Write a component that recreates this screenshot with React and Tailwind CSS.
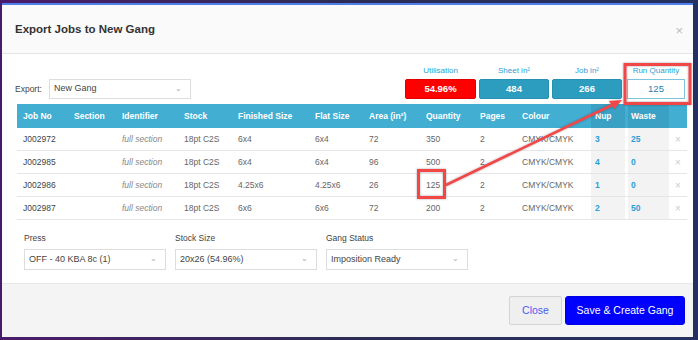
import React from "react";

const cols = "grid grid-cols-[51px_48px_62px_54px_77px_54px_57px_54px_42px_75px_34px_44px_18px]";

const rows = [
  ["J002972", "", "full section", "18pt C2S", "6x4", "6x4", "72", "350", "2", "CMYK/CMYK", "3", "25"],
  ["J002985", "", "full section", "18pt C2S", "6x4", "6x4", "96", "500", "2", "CMYK/CMYK", "4", "0"],
  ["J002986", "", "full section", "18pt C2S", "4.25x6", "4.25x6", "26", "125", "2", "CMYK/CMYK", "1", "0"],
  ["J002987", "", "full section", "18pt C2S", "6x6", "6x6", "72", "200", "2", "CMYK/CMYK", "2", "50"],
];

function Select({ value, className = "" }) {
  return (
    <div className={"flex items-center justify-between h-[21px] border border-[#ddd] bg-white pl-[4px] text-[9px] text-[#444] " + className}>
      <span>{value}</span>
      <span className="text-[8px] text-[#aaa] pr-[8px] leading-none">⌄</span>
    </div>
  );
}

export default function App() {
  return (
    <div className="relative w-[698px] h-[340px] overflow-hidden bg-gradient-to-r from-[#4a1a6a] via-[#2c2c55] to-[#233060] pl-[2px] pt-[3px] font-['Liberation_Sans',Arial,sans-serif]">
      <div className="w-[691px] h-[334px] bg-white border-t-2 border-[#4f7fe8] flex flex-col">
        {/* header */}
        <div className="h-[49px] bg-[#fafafa] border-b border-[#e5e5e5] flex items-center justify-between pl-[13px] pr-[10px] pt-[2px] shrink-0">
          <div className="text-[11.5px] font-bold text-[#333]">Export Jobs to New Gang</div>
          <div className="text-[13px] text-[#bbb] leading-none">×</div>
        </div>
        {/* body */}
        <div className="flex-1 pl-[13px] pr-[6px]">
          <div className="flex items-end h-[50px] pb-[5px]">
            <div className="flex items-center gap-[7px] pb-[0px]">
              <span className="text-[8.5px] text-[#444]">Export:</span>
              <Select value="New Gang" className="w-[142px] !h-[20px]" />
            </div>
            <div className="ml-auto flex items-end gap-[3px] pr-[2px]">
              {[
                ["Utilisation", "54.96%", "bg-[#ff0000] border-[#e00000] w-[71px]"],
                ["Sheet in²", "484", "bg-[#2c9dbf] border-[#2590b0] w-[70px]"],
                ["Job in²", "266", "bg-[#2c9dbf] border-[#2590b0] w-[70px]"],
              ].map(([l, v, c]) => (
                <div key={l} className="flex flex-col items-center">
                  <span className="text-[8px] text-[#2a9fd6] mb-[2px]">{l}</span>
                  <div className={"h-[20px] rounded-[2px] border flex items-center justify-center text-[9.5px] font-bold text-white " + c}>{v}</div>
                </div>
              ))}
              <div className="flex flex-col items-center w-[58px] ml-[2px]">
                <span className="text-[8px] text-[#2a9fd6] mb-[2px] whitespace-nowrap">Run Quantity</span>
                <div className="w-[58px] h-[20px] border border-[#7ec3dc] bg-white flex items-center justify-center text-[9.5px] text-[#2a7fb0]">125</div>
              </div>
            </div>
          </div>
          {/* table */}
          <div className="w-[670px] ml-[2px]">
            <div className={cols + " h-[24px] bg-[#42aed2] text-[8.5px] font-bold text-white items-center"}>
              {["Job No", "Section", "Identifier", "Stock", "Finished Size", "Flat Size", "Area (in²)", "Quantity", "Pages", "Colour"].map((h) => (
                <div key={h} className="pl-[6px] whitespace-nowrap">{h}</div>
              ))}
              <div className="h-full bg-[#3aa0c4] flex items-center pl-[4px]">Nup</div>
              <div className="h-full bg-[#3aa0c4] border-l-[3px] border-[#42aed2] flex items-center pl-[3px]">Waste</div>
              <div />
            </div>
            {rows.map((r, i) => (
              <div key={i} className={cols + " h-[23px] border-b border-[#e6e6e6] text-[8.5px] text-[#666] items-center"}>
                <div className="pl-[6px] text-[#444]">{r[0]}</div>
                <div className="pl-[6px]">{r[1]}</div>
                <div className="pl-[6px] italic text-[#888]">{r[2]}</div>
                {r.slice(3, 10).map((c, j) => (
                  <div key={j} className="pl-[6px] whitespace-nowrap">{c}</div>
                ))}
                <div className="h-full bg-[#f3f3f3] flex items-center pl-[4px] font-bold text-[#2a9fd6]">{r[10]}</div>
                <div className="h-full bg-[#f3f3f3] border-l-[3px] border-white flex items-center pl-[3px] font-bold text-[#2a9fd6]">{r[11]}</div>
                <div className="text-[10px] text-[#ccc] text-center">×</div>
              </div>
            ))}
          </div>
          {/* bottom selects */}
          <div className="flex gap-[9px] pl-[9px] mt-[12px]">
            {[
              ["Press", "OFF - 40 KBA 8c (1)"],
              ["Stock Size", "20x26 (54.96%)"],
              ["Gang Status", "Imposition Ready"],
            ].map(([l, v]) => (
              <div key={l} className="flex flex-col w-[142px]">
                <span className="text-[8.5px] text-[#444] mb-[4px]">{l}</span>
                <Select value={v} className="w-[142px]" />
              </div>
            ))}
          </div>
        </div>
        {/* footer */}
        <div className="h-[54px] bg-[#f4f4f4] border-t border-[#e8e8e8] flex items-center justify-end gap-[3px] pr-[8px] shrink-0">
          <button className="h-[29px] w-[53px] bg-[#efefef] border border-[#d4d4d4] rounded-[2px] text-[10.5px] text-[#4a5cf0]">Close</button>
          <button className="h-[29px] w-[120px] bg-[#0000ff] border border-[#0000e0] rounded-[3px] text-[10.5px] text-white">Save &amp; Create Gang</button>
        </div>
      </div>
      {/* annotations */}
      <svg className="absolute inset-0 pointer-events-none" width="698" height="340" viewBox="0 0 698 340">
        <defs>
          <filter id="sh" x="-20%" y="-20%" width="140%" height="140%">
            <feDropShadow dx="0" dy="0" stdDeviation="1.2" floodColor="#000" floodOpacity="0.35" />
          </filter>
        </defs>
        <g filter="url(#sh)" stroke="#f0474a" fill="none">
          <rect x="625" y="64.5" width="65" height="39" strokeWidth="3" />
          <rect x="418.5" y="170.5" width="26" height="27" strokeWidth="3" />
          <line x1="446" y1="185" x2="612" y2="105" strokeWidth="2.5" />
          <polygon points="622,100 609,101 614,109" fill="#f0474a" stroke="none" />
        </g>
      </svg>
    </div>
  );
}
